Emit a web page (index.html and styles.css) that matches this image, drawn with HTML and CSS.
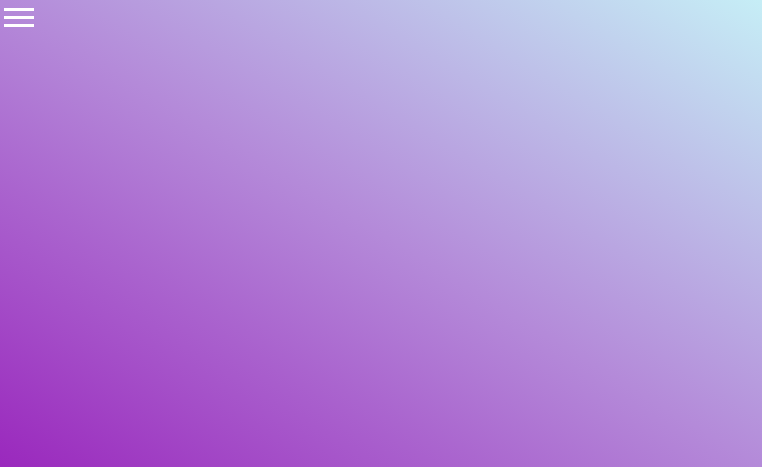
FILE: index.html
```html
<!DOCTYPE html>
<html>
<head>
<meta charset="utf-8">
<link rel="stylesheet" href="styles.css">
</head>
<body>
<div class="page">
  <button class="menu" aria-label="Menu">
    <span class="bar"></span>
    <span class="bar"></span>
    <span class="bar"></span>
  </button>
</div>
</body>
</html>
```
FILE: styles.css
```css
html, body {
  margin: 0;
  padding: 0;
  height: 100%;
}
body {
  font-family: "Liberation Sans", Arial, sans-serif;
}
.page {
  min-height: 100vh;
  background: linear-gradient(to top right, #9a28bd 0%, #b48ad9 50%, #c6eef6 100%);
  padding: 8px 4px;
  box-sizing: border-box;
}
.menu {
  display: flex;
  flex-direction: column;
  gap: 5px;
  background: none;
  border: 0;
  padding: 0;
  cursor: pointer;
}
.bar {
  display: block;
  width: 30px;
  height: 3px;
  background: #ffffff;
}
```
